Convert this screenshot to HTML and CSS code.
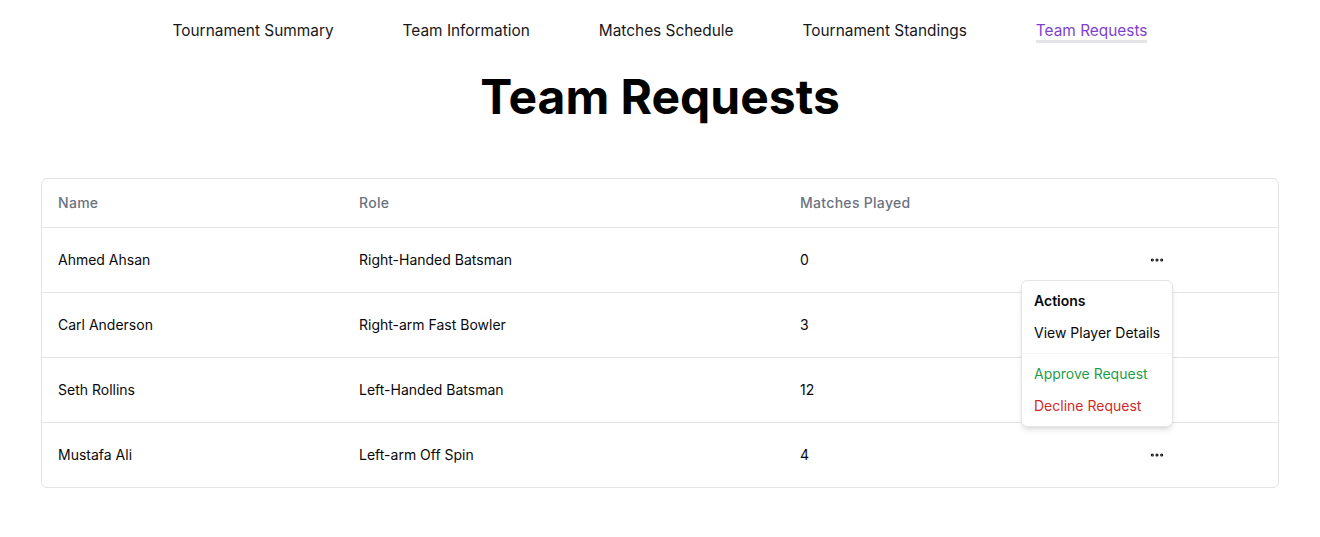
FILE: index.html
```html
<!DOCTYPE html>
<html lang="en">
<head>
    <meta charset="UTF-8">
    <title>Team Requests</title>
    <link rel="stylesheet" href="styles.css">
</head>
<body>
    <!-- Top Nav -->
    <nav class="nav">
        <a href="#">Tournament Summary</a>
        <a href="#">Team Information</a>
        <a href="#">Matches Schedule</a>
        <a href="#">Tournament Standings</a>
        <a href="#" class="active">Team Requests</a>
    </nav>

    <h1 class="page-title">Team Requests</h1>

    <!-- Requests table -->
    <div class="table-wrap">
        <table>
            <thead>
                <tr>
                    <th class="col-name">Name</th>
                    <th class="col-role">Role</th>
                    <th class="col-matches">Matches Played</th>
                    <th></th>
                </tr>
            </thead>
            <tbody>
                <tr>
                    <td>Ahmed Ahsan</td>
                    <td>Right-Handed Batsman</td>
                    <td>0</td>
                    <td>
                        <div class="actions">
                            <button class="dots">
                                <svg width="16" height="16" viewBox="0 0 24 24" fill="none" stroke="currentColor" stroke-width="3" stroke-linecap="round"><circle cx="5" cy="12" r="0.8"/><circle cx="12" cy="12" r="0.8"/><circle cx="19" cy="12" r="0.8"/></svg>
                            </button>
                            <div class="menu">
                                <div class="menu-label">Actions</div>
                                <div class="menu-item">View Player Details</div>
                                <div class="menu-sep"></div>
                                <div class="menu-item approve">Approve Request</div>
                                <div class="menu-item decline">Decline Request</div>
                            </div>
                        </div>
                    </td>
                </tr>
                <tr>
                    <td>Carl Anderson</td>
                    <td>Right-arm Fast Bowler</td>
                    <td>3</td>
                    <td>
                        <div class="actions">
                            <button class="dots">
                                <svg width="16" height="16" viewBox="0 0 24 24" fill="none" stroke="currentColor" stroke-width="3" stroke-linecap="round"><circle cx="5" cy="12" r="0.8"/><circle cx="12" cy="12" r="0.8"/><circle cx="19" cy="12" r="0.8"/></svg>
                            </button>
                        </div>
                    </td>
                </tr>
                <tr>
                    <td>Seth Rollins</td>
                    <td>Left-Handed Batsman</td>
                    <td>12</td>
                    <td>
                        <div class="actions">
                            <button class="dots">
                                <svg width="16" height="16" viewBox="0 0 24 24" fill="none" stroke="currentColor" stroke-width="3" stroke-linecap="round"><circle cx="5" cy="12" r="0.8"/><circle cx="12" cy="12" r="0.8"/><circle cx="19" cy="12" r="0.8"/></svg>
                            </button>
                        </div>
                    </td>
                </tr>
                <tr>
                    <td>Mustafa Ali</td>
                    <td>Left-arm Off Spin</td>
                    <td>4</td>
                    <td>
                        <div class="actions">
                            <button class="dots">
                                <svg width="16" height="16" viewBox="0 0 24 24" fill="none" stroke="currentColor" stroke-width="3" stroke-linecap="round"><circle cx="5" cy="12" r="0.8"/><circle cx="12" cy="12" r="0.8"/><circle cx="19" cy="12" r="0.8"/></svg>
                            </button>
                        </div>
                    </td>
                </tr>
            </tbody>
        </table>
    </div>
</body>
</html>
```

FILE: styles.css
```css
/* Reset */
* {
    margin: 0;
    padding: 0;
    box-sizing: border-box;
}

body {
    font-family: 'Inter', sans-serif;
    background-color: #fff;
    color: #09090b;
    padding: 0 41px;
}

/* Top nav */
.nav {
    display: flex;
    justify-content: center;
    gap: 69px;
    padding-top: 21px;
}

    .nav a {
        font-size: 15.4px;
        line-height: 19px;
        color: #18181b;
        text-decoration: none;
        border-bottom: 3px solid transparent;
    }

        .nav a.active {
            color: #7e3fd0;
            border-bottom-color: #e4e4e7;
        }

/* Title */
.page-title {
    text-align: center;
    font-size: 48px;
    line-height: 48px;
    font-weight: 700;
    margin-top: 30px;
    color: #000;
}

/* Table */
.table-wrap {
    margin-top: 57px;
    border: 1px solid #e4e4e7;
    border-radius: 6px;
}

    .table-wrap table {
        width: 100%;
        border-collapse: collapse;
        font-size: 14px;
    }

        .table-wrap table th {
            height: 48px;
            padding: 0 16px;
            text-align: left;
            font-weight: 500;
            letter-spacing: 0.3px;
            color: #6b7280;
            border-bottom: 1px solid #e4e4e7;
        }

        .table-wrap table td {
            height: 65px;
            padding: 0 16px;
            color: #09090b;
            border-bottom: 1px solid #e4e4e7;
        }

        .table-wrap table tbody tr:last-child td {
            border-bottom: none;
        }

.col-name { width: 301px; }
.col-role { width: 441px; }
.col-matches { width: 341px; }

/* Row actions */
.actions {
    position: relative;
    display: inline-block;
    vertical-align: middle;
}

.dots {
    border: none;
    background: none;
    color: #09090b;
    display: flex;
    align-items: center;
    justify-content: center;
    width: 32px;
    height: 32px;
    cursor: pointer;
}

/* Dropdown */
.menu {
    position: absolute;
    top: calc(100% + 4px);
    right: 0;
    width: 152px;
    background-color: #fff;
    border: 1px solid #e4e4e7;
    border-radius: 6px;
    padding: 4px;
    box-shadow: 0 4px 6px -1px rgba(0, 0, 0, 0.1), 0 2px 4px -2px rgba(0, 0, 0, 0.1);
    z-index: 10;
}

    .menu-label {
        padding: 6px 8px;
        font-weight: 600;
        line-height: 20px;
    }

    .menu-item {
        padding: 6px 8px;
        line-height: 20px;
        white-space: nowrap;
    }

        .menu-item.approve {
            color: #1f9d4a;
        }

        .menu-item.decline {
            color: #d02b2b;
        }

    .menu-sep {
        height: 1px;
        background-color: #f4f4f5;
        margin: 4px -4px;
    }
```
